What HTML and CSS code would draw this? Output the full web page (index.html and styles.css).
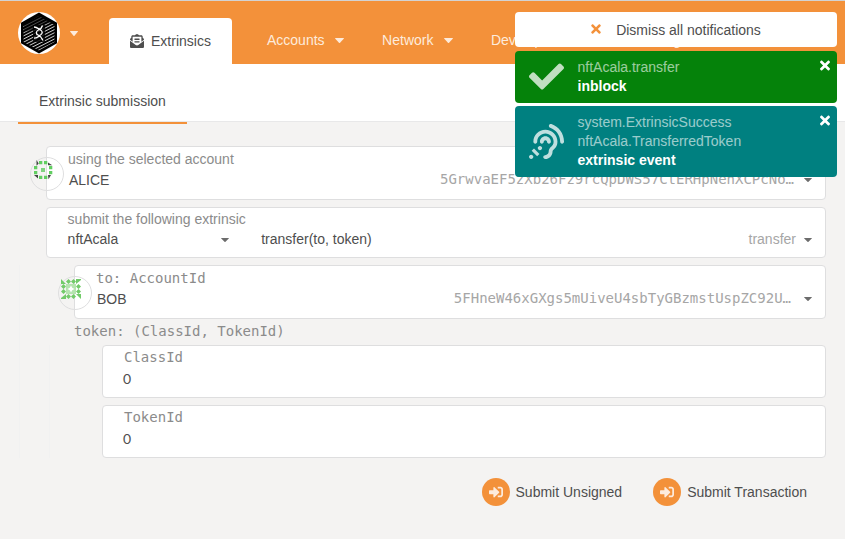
FILE: index.html
```
<!DOCTYPE html>
<html lang="en">
<head>
<meta charset="utf-8">
<title>Extrinsics</title>
<link rel="stylesheet" href="styles.css">
</head>
<body>
<svg class="defs" width="0" height="0">
<defs>
<symbol id="times" viewBox="0 0 352 512"><path d="M242.72 256l100.07-100.07c12.28-12.28 12.28-32.19 0-44.48l-22.24-22.24c-12.28-12.28-32.19-12.28-44.48 0L176 189.28 75.93 89.21c-12.28-12.28-32.19-12.28-44.48 0L9.21 111.45c-12.28 12.28-12.28 32.19 0 44.48L109.28 256 9.21 356.07c-12.28 12.28-12.28 32.19 0 44.48l22.24 22.24c12.28 12.28 32.2 12.28 44.48 0L176 322.72l100.07 100.07c12.28 12.28 32.2 12.28 44.48 0l22.24-22.24c12.28-12.28 12.28-32.19 0-44.48L242.72 256z"/></symbol>
<symbol id="sign-in" viewBox="0 0 512 512"><path d="M416 448h-84c-6.6 0-12-5.4-12-12v-40c0-6.6 5.4-12 12-12h84c17.7 0 32-14.3 32-32V160c0-17.7-14.3-32-32-32h-84c-6.6 0-12-5.4-12-12V76c0-6.6 5.4-12 12-12h84c53 0 96 43 96 96v192c0 53-43 96-96 96zm-47-201L201 79c-15-15-41-4.5-41 17v96H24c-13.3 0-24 10.7-24 24v96c0 13.3 10.7 24 24 24h136v96c0 21.5 26 32 41 17l168-168c9.3-9.4 9.3-24.6 0-34z"/></symbol>
<symbol id="caret" viewBox="0 0 10 5" preserveAspectRatio="none"><path d="M.3 0h9.4q.3.3 0 .7L5.6 4.7q-.6.5-1.2 0L.3.7Q0 .3.3 0z"/></symbol>
<pattern id="hatch" width="4" height="2.8" patternUnits="userSpaceOnUse" patternTransform="rotate(-27)"><rect width="4" height="2.8" fill="#000"/><rect y="1" width="4" height=".85" fill="#ddd"/></pattern>
</defs>
</svg>
<header class="topbar">
  <div class="brand">
    <svg class="logo" viewBox="0 0 42 42"><circle cx="21" cy="21" r="21" fill="#fff"/><path d="M21 .5 39 10.7v20.600L21 41.500 3 31.300V10.700z" fill="#000"/><path d="M21 4 36.500 13v17L21 38.500 5.500 30V13z" fill="url(#hatch)"/><path d="M21 3.500 33 10 21 15 6 20v-7z" fill="#000" opacity=".65"/><path d="M15 13h12v17H15z" fill="#000" opacity=".8"/><path d="M16 15c3 0 4.500 2 6.500 3s2.500 3.500 0 5-3 3.500-6.500 3M24.500 13.500c-.5 2-1.500 3.500-4 4.500s-3 4-.5 5 3.500 2.500 5 5.500" fill="none" stroke="#fff" stroke-width="1.300"/></svg>
    <svg class="caret brand-caret"><use href="#caret"/></svg>
  </div>
  <nav class="menu">
    <a class="tab active"><svg class="tab-icon" viewBox="0 0 512 512"><path d="M176 216h160c8.84 0 16-7.16 16-16v-16c0-8.84-7.16-16-16-16H176c-8.84 0-16 7.16-16 16v16c0 8.84 7.16 16 16 16zm-16 80c0 8.84 7.16 16 16 16h160c8.84 0 16-7.16 16-16v-16c0-8.84-7.16-16-16-16H176c-8.84 0-16 7.16-16 16v16zm96 121.130c-16.420 0-32.840-5.060-46.860-15.190L0 250.860V464c0 26.510 21.490 48 48 48h416c26.510 0 48-21.490 48-48V250.860L302.860 401.940c-14.020 10.120-30.440 15.190-46.860 15.190zm237.610-254.180c-8.850-6.940-17.240-13.470-29.610-22.810V96c0-26.510-21.490-48-48-48h-77.550c-3.040-2.200-5.870-4.260-9.040-6.560C312.600 29.170 279.200-.35 256 0c-23.200-.35-56.590 29.170-73.410 41.440-3.170 2.300-6 4.360-9.040 6.560H96c-26.510 0-48 21.490-48 48v44.140c-12.370 9.330-20.760 15.870-29.610 22.810A47.995 47.995 0 0 0 0 200.720v10.650l96 69.350V96h320v184.720l96-69.350v-10.650c0-14.740-6.780-28.670-18.390-37.770z"/></svg>Extrinsics</a>
    <a class="tab">Accounts<svg class="caret"><use href="#caret"/></svg></a>
    <a class="tab">Network<svg class="caret"><use href="#caret"/></svg></a>
    <a class="tab">Developer<svg class="caret"><use href="#caret"/></svg></a>
    <a class="tab settings">Settings</a>
  </nav>
</header>
<div class="subnav"><a class="subtab">Extrinsic submission</a></div>
<main class="content">
  <section class="field account">
    <svg class="identicon" viewBox="0 0 34 34"><circle cx="17" cy="17" r="16.500" fill="none" stroke="#dededf"/><path d="M6.500 3 8.700 6.500 6.500 8.700zM18 5.500 22.300 8.200H18zM4 18h4v3.500zM18 18h3l-2.500 4.200z" fill="#444"/><path d="M9 4h3.300v3.300H9zM14 4h3.300v3.300H14zM9 18.800h3.300v3.300H9zM14 18.800h3.300v3.300H14zM4 8.900h3.300v3.300H4zM4 13.900h3.300v3.300H4zM19 8.900h3.300v3.300H19zM19 13.900h3.300v3.300H19z" fill="#61ce61"/><path d="M11 11h4v4h-4z" fill="#7fd37f"/></svg>
    <label class="label">using the selected account</label>
    <div class="row name-row"><span>ALICE</span><span class="address first">5GrwvaEF5zXb26Fz9rcQpDWS57CtERHpNehXCPcNo…</span><svg class="arrow"><use href="#caret"/></svg></div>
  </section>
  <section class="field extrinsic">
    <label class="label">submit the following extrinsic</label>
    <div class="row call-row"><span class="module">nftAcala<svg class="arrow"><use href="#caret"/></svg></span><span class="call">transfer(to, token)</span><span class="hint">transfer</span><svg class="arrow"><use href="#caret"/></svg></div>
  </section>
  <div class="params">
    <section class="field account">
      <svg class="identicon" viewBox="0 0 34 34"><circle cx="17" cy="17" r="16.500" fill="none" stroke="#dededf"/><path d="M8 8h10v10H8z" fill="#b5e4af"/><path d="m13 9.500 1.200 2.300L16.500 13l-2.300 1.200L13 16.500l-1.200-2.300L9.500 13l2.300-1.200z" fill="#fff"/><path d="M3 3l5 5H3zM23 3v1l-5 4V3zM3 23v-1l5-4v5zM23 23l-5-5h5zM10.500 3 13 5.500 10.500 8 8 5.500zM15.500 3 18 5.500 15.500 8 13 5.500zM10.500 18l2.500 2.500-2.500 2.500L8 20.500zM15.500 18l2.500 2.500-2.500 2.500-2.500-2.500zM5.500 8 8 10.500 5.500 13 3 10.500zM5.500 13 8 15.500 5.500 18 3 15.500zM20.500 8l2.500 2.500-2.500 2.500-2.500-2.500zM20.500 13l2.500 2.500-2.500 2.500-2.500-2.500z" fill="#72cb69"/></svg>
      <label class="label mono">to: AccountId</label>
      <div class="row name-row"><span>BOB</span><span class="address">5FHneW46xGXgs5mUiveU4sbTyGBzmstUspZC92U…</span><svg class="arrow"><use href="#caret"/></svg></div>
    </section>
    <div class="tuple-label mono">token: (ClassId, TokenId)</div>
    <div class="tuple">
      <section class="field number"><label class="label mono">ClassId</label><div class="value">0</div></section>
      <section class="field number"><label class="label mono">TokenId</label><div class="value">0</div></section>
    </div>
  </div>
  <div class="actions">
    <button class="submit"><span class="disc"><svg><use href="#sign-in"/></svg></span>Submit Unsigned</button>
    <button class="submit"><span class="disc"><svg><use href="#sign-in"/></svg></span>Submit Transaction</button>
  </div>
</main>
<aside class="notifications">
  <div class="dismiss"><svg><use href="#times"/></svg>Dismiss all notifications</div>
  <div class="note success">
    <svg class="note-icon" viewBox="0 0 512 512"><path d="M173.898 439.404l-166.400-166.400c-9.997-9.997-9.997-26.206 0-36.204l36.203-36.204c9.997-9.998 26.207-9.998 36.204 0L192 312.690 432.095 72.596c9.997-9.997 26.207-9.997 36.204 0l36.203 36.204c9.997 9.997 9.997 26.206 0 36.204l-294.400 294.401c-9.998 9.997-26.207 9.997-36.204-.001z"/></svg>
    <div class="note-text"><span>nftAcala.transfer</span><strong>inblock</strong></div>
    <svg class="close"><use href="#times"/></svg>
  </div>
  <div class="note event">
    <svg class="note-icon" viewBox="0 0 512 512"><path d="M216 260c0 15.464-12.536 28-28 28s-28-12.536-28-28c0-44.112 35.888-80 80-80s80 35.888 80 80c0 15.464-12.536 28-28 28s-28-12.536-28-28c0-13.234-10.767-24-24-24s-24 10.766-24 24zm24-176c-97.047 0-176 78.953-176 176 0 15.464 12.536 28 28 28s28-12.536 28-28c0-66.168 53.832-120 120-120s120 53.832 120 120c0 75.164-71.009 70.311-71.997 143.622L288 404c0 28.673-23.327 52-52 52-15.464 0-28 12.536-28 28s12.536 28 28 28c59.475 0 107.876-48.328 108-107.774.595-34.428 72-48.240 72-144.226 0-97.047-78.953-176-176-176zm-80 236c-17.673 0-32 14.327-32 32s14.327 32 32 32 32-14.327 32-32-14.327-32-32-32zM32 448c-17.673 0-32 14.327-32 32s14.327 32 32 32 32-14.327 32-32-14.327-32-32-32zm480-187.993c0-1.518-.012-3.025-.045-4.531C510.076 140.525 436.157 38.470 327.994 1.511c-14.633-4.998-30.549 2.809-35.550 17.442-5 14.633 2.810 30.549 17.442 35.550 85.906 29.354 144.610 110.513 146.077 201.953l.003.188c.026 1.118.033 2.236.033 3.363 0 15.464 12.536 28 28 28s28.001-12.536 28.001-28zM152.971 439.029l-80-80L39.030 392.970l80 80 33.941-33.941z"/></svg>
    <div class="note-text"><span>system.ExtrinsicSuccess</span><span>nftAcala.TransferredToken</span><strong>extrinsic event</strong></div>
    <svg class="close"><use href="#times"/></svg>
  </div>
</aside>
</body>
</html>
```
FILE: styles.css
```
* { box-sizing: border-box; }
body {
  margin: 0;
  height: 539px;
  overflow: hidden;
  background: #f4f3f2;
  color: #4e4e4e;
  font: 14px/20px "Liberation Sans", Arial, sans-serif;
}
svg { fill: currentColor; flex: none; }
.defs { position: absolute; }
.mono, .address { font-family: "DejaVu Sans Mono", monospace; }

.topbar {
  display: flex;
  height: 64px;
  background: #f3913a;
  border-top: 1px solid #d3d3d3;
  color: #fdebdc;
}
.brand { display: flex; width: 109px; padding: 11px 0 0 18px; }
.logo { width: 42px; height: 42px; }
.caret { width: 9px; height: 5px; }
.brand-caret { width: 8px; margin: 19px 0 0 10px; }
.menu { display: flex; padding-top: 17px; }
.tab { display: flex; align-items: center; gap: 10.5px; height: 46px; padding-right: 38px; white-space: nowrap; }
.tab:not(.active) { padding-bottom: 2px; }
.tab.active {
  width: 123px;
  margin-right: 35px;
  padding: 0 0 0 21px;
  gap: 7px;
  border-radius: 4px 4px 0 0;
  background: #fff;
  color: #4e4e4e;
}
.tab-icon { width: 14px; height: 14px; }
.settings { padding-left: 25px; }

.subnav { height: 58px; padding-left: 18px; background: #fff; border-bottom: 1px solid #e8e8e9; }
.subtab { display: block; width: 169px; height: 60px; padding: 27px 21px 0; border-bottom: 2px solid #f3913a; white-space: nowrap; }

.content { padding: 24px 19px 0 46px; }
.field { position: relative; background: #fff; border: 1px solid #dededf; border-radius: 4px; }
.label { display: block; color: #8b8b8b; }
.row { display: flex; align-items: center; }
.account { height: 54px; padding: 2px 13px 0 21px; }
.identicon { position: absolute; left: -17px; top: 10px; width: 34px; height: 34px; }
.name-row { margin-top: 1px; padding-left: 1px; }
.address { margin: -2px 13px 0 auto; color: #a6a6a6; }
.address.first { margin-right: 10px; }
.arrow { width: 8px; height: 4px; margin-top: 2px; color: #6c6c6c; }
.name-row .arrow { margin-top: -1px; }
.extrinsic { height: 51px; margin-top: 7px; padding: 1px 13px 0 20.6px; }
.module { display: flex; align-items: center; justify-content: space-between; width: 161px; }
.call { margin-left: 32.6px; }
.hint { margin-left: auto; margin-right: 8px; color: #a6a6a6; }

.params { margin: 7px 0 0 -27px; padding-left: 54px; border-left: 1px solid #f1f1f1; }
.tuple-label { height: 26px; padding-top: 2px; color: #8b8b8b; }
.tuple { display: grid; gap: 7px; margin-left: -25px; padding-left: 52px; border-left: 1px solid #f1f1f1; }
.number { height: 53px; padding: 1px 21px 0; }
.value { margin: 2px 0 0 -1px; font-family: Lato, sans-serif; }

.actions { display: flex; justify-content: flex-end; gap: 31px; padding: 20px 19px 0 0; }
.submit { display: flex; align-items: center; gap: 6px; padding: 0; border: 0; background: none; color: inherit; font: inherit; }
.disc { display: grid; place-items: center; width: 28px; height: 28px; border-radius: 50%; background: #f3913a; color: #fdebdc; }
.disc svg { width: 14px; height: 14px; }

.notifications { position: absolute; top: 12px; left: 515px; width: 322px; }
.dismiss { display: flex; align-items: center; justify-content: center; gap: 15px; height: 35px; margin-bottom: 4px; border-radius: 4px; background: #fff; }
.dismiss svg { width: 10px; height: 14px; margin-top: -2px; color: #f3913a; }
.note { display: flex; align-items: center; height: 52px; margin-bottom: 3px; padding: 0 7px 0 14px; border-radius: 4px; color: #fff; line-height: 19px; }
.success { background: #05820a; }
.success .note-icon { margin-top: -2px; }
.event { height: 71px; background: #008080; }
.note-icon { width: 35px; height: 35px; margin-right: 13.5px; opacity: .75; }
.note-text { display: flex; flex-direction: column; flex: 1; }
.note-text span { opacity: .6; }
.close { align-self: flex-start; width: 10px; height: 15px; margin-top: 7px; }
```
